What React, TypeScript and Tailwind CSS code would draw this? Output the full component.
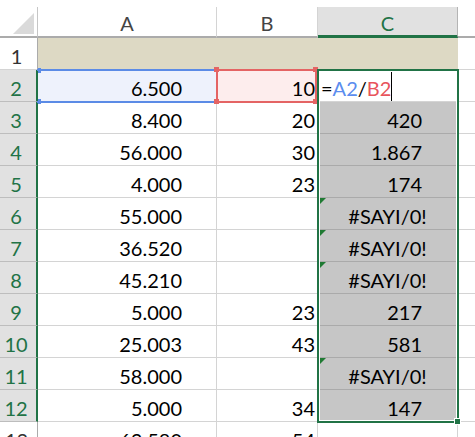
const rows = [
  { n: 3, a: '8.400', b: '20', c: '420' },
  { n: 4, a: '56.000', b: '30', c: '1.867' },
  { n: 5, a: '4.000', b: '23', c: '174' },
  { n: 6, a: '55.000', b: '', c: '#SAYI/0!' },
  { n: 7, a: '36.520', b: '', c: '#SAYI/0!' },
  { n: 8, a: '45.210', b: '', c: '#SAYI/0!' },
  { n: 9, a: '5.000', b: '23', c: '217' },
  { n: 10, a: '25.003', b: '43', c: '581' },
  { n: 11, a: '58.000', b: '', c: '#SAYI/0!' },
  { n: 12, a: '5.000', b: '34', c: '147' },
]

function ErrorMark() {
  return (
    <svg className="absolute left-[2px] top-0" width="6" height="6" viewBox="0 0 6 6">
      <polygon points="0,0 6,0 0,6" fill="#1f7a33" />
    </svg>
  )
}

export default function App() {
  return (
    <div className="relative w-[475px] h-[437px] overflow-hidden bg-white font-[Lato,'Liberation_Sans',sans-serif] text-[20px] leading-[20px] text-black">
      {/* column headers */}
      <div className="flex h-[38px] pt-[7px]">
        <div className="w-[38px] h-[31px] border-r border-b-2 border-r-[#c6c6c6] border-b-[#ababab] flex items-end justify-end pr-[3px] pb-[2px]">
          <svg width="21" height="21" viewBox="0 0 21 21">
            <polygon points="21,0 21,21 0,21" fill="#dadada" />
          </svg>
        </div>
        <div className="w-[179px] h-[31px] border-r border-b-2 border-r-[#d4d4d4] border-b-[#ababab] flex items-end justify-center pb-[3px] text-[#444]">A</div>
        <div className="w-[101px] h-[31px] border-r border-b-2 border-r-[#d4d4d4] border-b-[#ababab] flex items-end justify-center pb-[3px] text-[#444]">B</div>
        <div className="w-[140px] h-[31px] border-r border-b-[3px] border-r-[#b4b4b4] border-b-[#217346] bg-[#e1e1e1] flex items-end justify-center pb-[2px] text-[#217346]">C</div>
        <div className="flex-1 h-[31px] border-b-2 border-b-[#ababab]" />
      </div>

      {/* row 1 */}
      <div className="flex h-[32px]">
        <div className="w-[38px] border-r border-b border-r-[#ababab] border-b-[#d4d4d4] flex items-end justify-center pr-[4px] pb-[3px] text-[#333]">1</div>
        <div className="w-[179px] border-r border-b border-[#ddd9c4] bg-[#ddd9c4]" />
        <div className="w-[101px] border-r border-b border-[#ddd9c4] bg-[#ddd9c4]" />
        <div className="w-[140px] border-r border-b border-[#ddd9c4] bg-[#ddd9c4]" />
        <div className="flex-1 border-b border-[#d4d4d4]" />
      </div>

      {/* row 2 */}
      <div className="flex h-[32px]">
        <div className="w-[38px] bg-[#e1e1e1] border-r-2 border-b border-r-[#217346] border-b-[#bdbdbd] flex items-end justify-center pr-[4px] pb-[3px] text-[#217346]">2</div>
        <div className="w-[179px] bg-[#eef2fc] border-r border-b border-[#d4d4d4] flex items-end justify-end pr-[34px] pb-[3px]">6.500</div>
        <div className="w-[101px] bg-[#fdeded] border-r border-b border-[#d4d4d4] flex items-end justify-end pr-[2px] pb-[3px]">10</div>
        <div className="w-[140px] bg-white border-r border-b border-[#d4d4d4] flex items-end pl-[3px] pb-[3px]">
          <span>=</span>
          <span className="text-[#5b8def]">A2</span>
          <span>/</span>
          <span className="text-[#e8545c]">B2</span>
          <span className="w-px h-[30px] bg-black mb-[-3px]" />
        </div>
        <div className="flex-1 border-b border-[#d4d4d4]" />
      </div>

      {rows.map((r) => {
        const err = r.c.startsWith('#')
        return (
          <div key={r.n} className="flex h-[32px]">
            <div className="w-[38px] bg-[#e1e1e1] border-r-2 border-b border-r-[#217346] border-b-[#bdbdbd] flex items-end justify-center pr-[4px] pb-[3px] text-[#217346]">{r.n}</div>
            <div className="w-[179px] border-r border-b border-[#d4d4d4] flex items-end justify-end pr-[34px] pb-[3px]">{r.a}</div>
            <div className="w-[101px] border-r border-b border-[#d4d4d4] flex items-end justify-end pr-[2px] pb-[3px]">{r.b}</div>
            <div className={`relative w-[140px] bg-[#c6c6c6] border-r border-b border-[#aaaaaa] flex items-end pb-[3px] ${err ? 'justify-center' : 'justify-end pr-[35px]'}`}>
              {err && <ErrorMark />}
              {r.c}
            </div>
            <div className="flex-1 border-b border-[#d4d4d4]" />
          </div>
        )
      })}

      {/* row 13, cut off */}
      <div className="flex h-[32px]">
        <div className="w-[38px] border-r border-b border-r-[#ababab] border-b-[#d4d4d4] flex items-end justify-center pr-[4px] pb-[3px] text-[#333]">13</div>
        <div className="w-[179px] border-r border-b border-[#d4d4d4] flex items-end justify-end pr-[34px] pb-[3px]">63.580</div>
        <div className="w-[101px] border-r border-b border-[#d4d4d4] flex items-end justify-end pr-[2px] pb-[3px]">54</div>
        <div className="w-[140px] border-r border-b border-[#d4d4d4]" />
        <div className="flex-1 border-b border-[#d4d4d4]" />
      </div>

      {/* formula reference highlights */}
      <div className="absolute left-[37px] top-[69px] w-[181px] h-[34px] border-2 border-l-0 border-[#5b8be6]" />
      <div className="absolute left-[38px] top-[68px] w-[3px] h-[5px] bg-[#5b8be6]" />
      <div className="absolute left-[38px] top-[99px] w-[3px] h-[5px] bg-[#5b8be6]" />
      <div className="absolute left-[216px] top-[69px] w-[101px] h-[34px] border-2 border-[#e46464]" />
      <div className="absolute left-[214px] top-[67px] w-[5px] h-[5px] bg-[#e46464]" />
      <div className="absolute left-[214px] top-[99px] w-[5px] h-[5px] bg-[#e46464]" />
      <div className="absolute left-[313px] top-[67px] w-[5px] h-[5px] bg-[#e46464]" />
      <div className="absolute left-[313px] top-[99px] w-[5px] h-[5px] bg-[#e46464]" />

      {/* selection range C2:C12 */}
      <div className="absolute left-[317px] top-[69px] w-[142px] h-[354px] border-2 border-[#217346] shadow-[inset_0_0_0_1px_#ffffff]" />
      <div className="absolute left-[454px] top-[418px] w-[7px] h-[7px] bg-[#217346] border border-white" />
    </div>
  )
}
